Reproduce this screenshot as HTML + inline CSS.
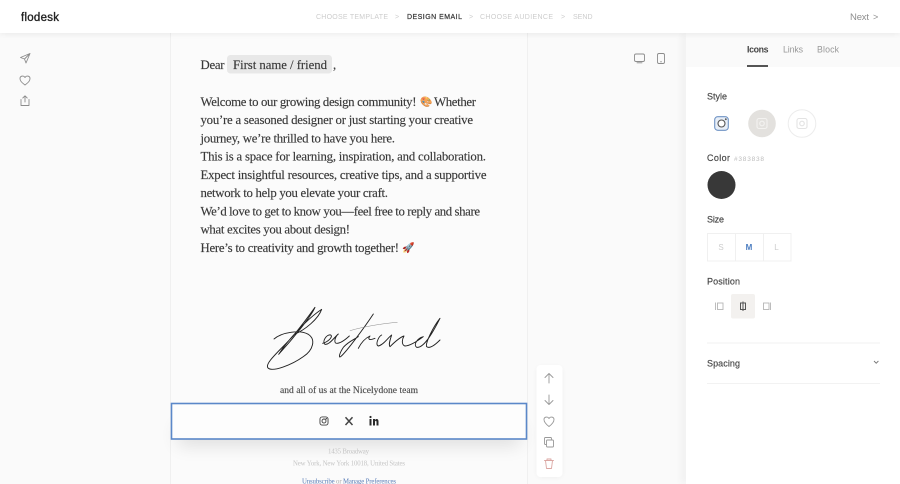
<!DOCTYPE html>
<html lang="en"><head><meta charset="utf-8"><title>flodesk</title>
<style>
html,body{margin:0;padding:0;width:900px;height:484px;overflow:hidden;background:#fafafa}
svg{display:block}
.s{font-family:"Liberation Serif",serif;fill:#383838;font-size:12.8px;stroke:#383838;stroke-width:.14px}
.u{font-family:"Liberation Sans",sans-serif}
.l{font-family:"Liberation Sans",sans-serif;font-size:9px;fill:#444;font-weight:500;stroke:#444;stroke-width:.15px}
.n{font-family:"Liberation Sans",sans-serif;font-size:7px;fill:#cdcdcd}
.i{fill:none;stroke:#8c8c8c;stroke-width:.9;stroke-linecap:round;stroke-linejoin:round}
</style></head><body>
<svg width="900" height="484" viewBox="0 0 900 484" xmlns="http://www.w3.org/2000/svg">
<defs>
<filter id="sb" x="-20%" y="-100%" width="140%" height="300%"><feGaussianBlur stdDeviation="9"/></filter>
<filter id="sp" x="-200%" y="-10%" width="500%" height="120%"><feGaussianBlur stdDeviation="4"/></filter>
<filter id="st" x="-20%" y="-200%" width="140%" height="500%"><feGaussianBlur stdDeviation="3"/></filter>
<filter id="sm" x="-50%" y="-20%" width="200%" height="140%"><feGaussianBlur stdDeviation="3"/></filter>
<g id="ig"><rect x="-6.5" y="-6.5" width="13" height="13" rx="3.5"/><circle r="3.2"/></g>
</defs>
<rect width="900" height="484" fill="#fafafa"/>
<rect x="170" y="33" width="358" height="451" fill="#fbfbfb"/>
<path d="M170.5 33V484M527.5 33V484" stroke="#f0f0f0" fill="none"/>

<!-- Left icons -->
<g class="i">
<path d="M30 53.500 L20.500 57.500 L24.500 59 L26 63 Z M30 53.500 L24.500 59"/>
<path d="M25 85 C21 82 20 80.500 20 78.500 C20 76 23.500 75 25 77.500 C26.500 75 30 76 30 78.500 C30 80.500 29 82 25 85Z"/>
<path d="M25 102V96M22.800 98 25 95.800 27.200 98M21 99.500V105.500H29V99.500"/>
</g>

<!-- Device icons -->
<g class="i">
<rect x="634.500" y="54" width="10" height="7.500" rx="1.500"/><path d="M637 62.800H642"/>
<rect x="657.500" y="53.500" width="7" height="10" rx="1.500"/><path d="M660.500 61.800H661.500"/>
</g>

<!-- Email text -->
<text class="s" x="200.500" y="69" textLength="24" lengthAdjust="spacing">Dear</text>
<rect x="227" y="55" width="105" height="18.500" rx="3.500" fill="#e8e8e8"/>
<text class="s" x="233" y="69" textLength="94" lengthAdjust="spacing">First name / friend</text>
<text class="s" x="333" y="69">,</text>

<text class="s" x="200.500" y="106" textLength="216" lengthAdjust="spacing">Welcome to our growing design community!</text>
<text x="420" y="105" font-size="10" font-family="'Noto Color Emoji','Liberation Sans',sans-serif">🎨</text>
<text class="s" x="434" y="106" textLength="42" lengthAdjust="spacing">Whether</text>
<text class="s" x="200.500" y="124" textLength="272.500" lengthAdjust="spacing">you’re a seasoned designer or just starting your creative</text>
<text class="s" x="200.500" y="142.500" textLength="194.500" lengthAdjust="spacing">journey, we’re thrilled to have you here.</text>
<text class="s" x="200.500" y="160.500" textLength="285.500" lengthAdjust="spacing">This is a space for learning, inspiration, and collaboration.</text>
<text class="s" x="200.500" y="179" textLength="286" lengthAdjust="spacing">Expect insightful resources, creative tips, and a supportive</text>
<text class="s" x="200.500" y="197" textLength="187.500" lengthAdjust="spacing">network to help you elevate your craft.</text>
<text class="s" x="200.500" y="215.500" textLength="279.500" lengthAdjust="spacing">We’d love to get to know you—feel free to reply and share</text>
<text class="s" x="200.500" y="233.500" textLength="149.500" lengthAdjust="spacing">what excites you about design!</text>
<text class="s" x="200.500" y="252" textLength="198.500" lengthAdjust="spacing">Here’s to creativity and growth together!</text>
<text x="402" y="251" font-size="10" font-family="'Noto Color Emoji','Liberation Sans',sans-serif">🚀</text>

<!-- Signature -->
<g transform="translate(250 295) scale(.3333)" fill="none" stroke="#222" stroke-width="2.800" stroke-linecap="round" stroke-linejoin="round">
<path d="M72 132 C95 112 150 103 175 118 C198 133 190 165 160 185 C125 210 68 232 54 219 C42 205 92 165 130 122 C155 92 180 58 195 37 C185 62 130 130 86 178 C110 140 170 72 215 43 C205 72 165 105 133 118"/>
</g>
<g transform="translate(310 310) scale(.3333)" fill="none" stroke="#222" stroke-width="2.800" stroke-linecap="round" stroke-linejoin="round">
<path d="M38 100 C55 95 70 80 62 75 C50 72 35 95 45 103 C58 105 70 85 85 72 C75 80 70 100 80 100 C92 100 105 90 118 78"/>
<path d="M190 12 C165 50 110 125 92 140 C85 145 88 130 100 112 C115 95 130 90 145 80"/>
<path d="M145 115 C155 95 165 85 180 78 C172 88 178 92 195 85"/>
<path d="M215 75 C205 80 195 105 205 108 C220 105 232 85 245 75 C240 90 235 105 240 110 C255 95 270 82 282 78 C275 90 275 105 285 108 C300 108 320 95 340 80 C320 85 310 105 320 112 C340 115 365 75 390 25 C370 50 345 100 350 110 C360 118 380 100 390 90"/>
<path d="M120 62 C160 50 220 40 262 37" stroke="#888" stroke-width="1.500"/>
</g>

<text class="s" x="280" y="393" style="font-size:9.5px;fill:#4a4a4a;stroke:#4a4a4a" textLength="138" lengthAdjust="spacing">and all of us at the Nicelydone team</text>

<!-- Selected block -->
<rect x="178" y="425" width="342" height="20" fill="#000" opacity=".12" filter="url(#sb)"/>
<rect x="171.500" y="403.500" width="355" height="35.500" fill="#fdfdfd" stroke="#5b88c9" stroke-width="1.600"/>
<g transform="translate(324 421) scale(.62)" fill="none" stroke="#444" stroke-width="1.500"><use href="#ig"/><circle cx="3.800" cy="-3.800" r=".5"/></g>
<path d="M345.500 417.300 L352.500 425 M352.500 417.300 L345.500 425" stroke="#444" stroke-width="1.500" fill="none"/>
<g fill="#2a2a2a"><rect x="369.500" y="419" width="2" height="6.500"/><circle cx="370.500" cy="417" r="1.100"/><path d="M373 419H375V420C376.500 418.300 378.500 418.800 378.500 421.500V425.500H376.500V422C376.500 420.300 375 420.300 375 422V425.500H373Z"/></g>

<!-- Footer -->
<text x="328" y="453.500" font-family="'Liberation Serif',serif" font-size="6.800" fill="#c4c4c4" textLength="41" lengthAdjust="spacing">1435 Broadway</text>
<text x="293" y="465.500" font-family="'Liberation Serif',serif" font-size="6.800" fill="#c4c4c4" textLength="112" lengthAdjust="spacing">New York, New York 10018, United States</text>
<text x="302" y="483.500" font-family="'Liberation Serif',serif" font-size="6.800" fill="#5a7db8" textLength="94" lengthAdjust="spacing">Unsubscribe <tspan fill="#aaa">or</tspan> Manage Preferences</text>

<!-- Toolbar -->
<rect x="537" y="367" width="25" height="110" rx="4" fill="#000" opacity=".05" filter="url(#sm)"/>
<rect x="536.500" y="365" width="26" height="112" rx="4" fill="#fff"/>
<g class="i" style="stroke:#999">
<path d="M549 383V373.500M545 377.500 549 373.500 553 377.500"/>
<path d="M549 395V404.500M545 400.500 549 404.500 553 400.500"/>
<path d="M549 426.500 C545 423.500 544 421.500 544 419.500 C544 417 547.500 416 549 418.500 C550.500 416 554 417 554 419.500 C554 421.500 553 423.500 549 426.500Z"/>
<rect x="544.500" y="437.500" width="7" height="7" rx="1"/><rect x="546.500" y="440" width="7" height="7" rx="1" fill="#fff"/>
<path d="M544.500 460.500H553.500M547 460.500V459H551V460.500M545.500 460.500 546.500 468.500H551.500L552.500 460.500" style="stroke:#dba6a2"/>
</g>

<!-- Right panel -->
<rect x="682" y="33" width="6" height="451" fill="#000" opacity=".05" filter="url(#sp)"/>
<rect x="686" y="33" width="214" height="451" fill="#fff"/>
<rect x="686" y="33" width="214" height="34" fill="#fafafa"/>
<text class="u" x="747" y="52.500" font-size="8.800" font-weight="700" fill="#444" textLength="21.500" lengthAdjust="spacing">Icons</text>
<text class="u" x="783" y="52.500" font-size="8.800" fill="#999" textLength="20" lengthAdjust="spacing">Links</text>
<text class="u" x="817" y="52.500" font-size="8.800" fill="#999" textLength="22" lengthAdjust="spacing">Block</text>
<rect x="747" y="65" width="21" height="2" fill="#555"/>

<text class="l" x="707" y="99.500" textLength="20" lengthAdjust="spacing">Style</text>
<g transform="translate(721.500 123.500)" fill="none" stroke="#6f93c4" stroke-width="1.100"><rect x="-6.800" y="-6.800" width="13.600" height="13.600" rx="3" fill="#e8eff8"/><circle r="3.500" fill="#fff" stroke="#555"/><circle cx="4.300" cy="-4.300" r=".4" stroke="#555"/></g>
<circle cx="762" cy="123.500" r="13.800" fill="#e3e1de"/>
<g transform="translate(762 123.500)" fill="none" stroke="#f3f2f0" stroke-width="1.100"><rect x="-5" y="-5" width="10" height="10" rx="2"/><circle r="2.300"/></g>
<circle cx="802" cy="123.500" r="13.800" fill="#fff" stroke="#ececec"/>
<g transform="translate(802 123.500)" fill="none" stroke="#e3e3e3" stroke-width="1.100"><rect x="-5" y="-5" width="10" height="10" rx="2"/><circle r="2.300"/></g>

<text class="l" x="707" y="161" textLength="23" lengthAdjust="spacing">Color</text>
<text class="u" x="734" y="161" font-size="6.500" fill="#bcbcbc" textLength="30" lengthAdjust="spacing">#383838</text>
<circle cx="721.500" cy="185" r="14" fill="#383838"/>

<text class="l" x="707" y="222.500" textLength="17" lengthAdjust="spacing">Size</text>
<g fill="#fff" stroke="#f0f0f0"><rect x="707.500" y="233.500" width="28" height="27.500"/><rect x="735.500" y="233.500" width="28" height="27.500"/><rect x="763.500" y="233.500" width="27.500" height="27.500"/></g>
<text class="u" x="721" y="250" font-size="8" fill="#cdcdcd" text-anchor="middle">S</text>
<text class="u" x="749" y="250" font-size="8" font-weight="700" fill="#4a7cc0" text-anchor="middle">M</text>
<text class="u" x="776.500" y="250" font-size="8" fill="#cdcdcd" text-anchor="middle">L</text>

<text class="l" x="707" y="284.500" textLength="33" lengthAdjust="spacing">Position</text>
<rect x="731" y="294" width="24" height="24.500" rx="2" fill="#f3f1ef"/>
<g fill="none" stroke="#b5b5b5" stroke-width=".9"><path d="M715.500 302.500V310"/><rect x="717.500" y="303" width="5.500" height="6.500"/><rect x="763.500" y="303" width="5.500" height="6.500"/><path d="M770.500 302.500V310"/></g>
<g fill="none" stroke="#555" stroke-width="1"><rect x="740.500" y="303" width="5" height="6.500"/><path d="M743 301.500V311"/></g>

<path d="M707 343H880M707 383.500H880" stroke="#f2f2f2" fill="none"/>
<text class="l" x="707" y="366.500" textLength="33" lengthAdjust="spacing">Spacing</text>
<path d="M874 361 876.200 363.200 878.400 361" fill="none" stroke="#777" stroke-width=".9"/>

<!-- Top bar -->
<rect x="0" y="29" width="900" height="5" fill="#000" opacity=".07" filter="url(#st)"/>
<rect width="900" height="33" fill="#fff"/>
<text class="u" x="21" y="21" font-size="11.500" fill="#222" stroke="#222" stroke-width=".35" textLength="38" lengthAdjust="spacing">flodesk</text>
<text class="n" x="316" y="19" textLength="72" lengthAdjust="spacing">CHOOSE TEMPLATE</text>
<text class="n" x="395" y="19">&gt;</text>
<text class="n" x="407" y="19" textLength="55" lengthAdjust="spacing" style="fill:#333;stroke:#333;stroke-width:.2px">DESIGN EMAIL</text>
<text class="n" x="469" y="19">&gt;</text>
<text class="n" x="480" y="19" textLength="73" lengthAdjust="spacing">CHOOSE AUDIENCE</text>
<text class="n" x="561" y="19">&gt;</text>
<text class="n" x="573" y="19" textLength="19.500" lengthAdjust="spacing">SEND</text>
<text class="u" x="850" y="20" font-size="9.500" fill="#8e8e8e" textLength="19" lengthAdjust="spacing">Next</text>
<text class="u" x="873" y="20" font-size="9" fill="#8e8e8e">&gt;</text>
</svg>
</body></html>
